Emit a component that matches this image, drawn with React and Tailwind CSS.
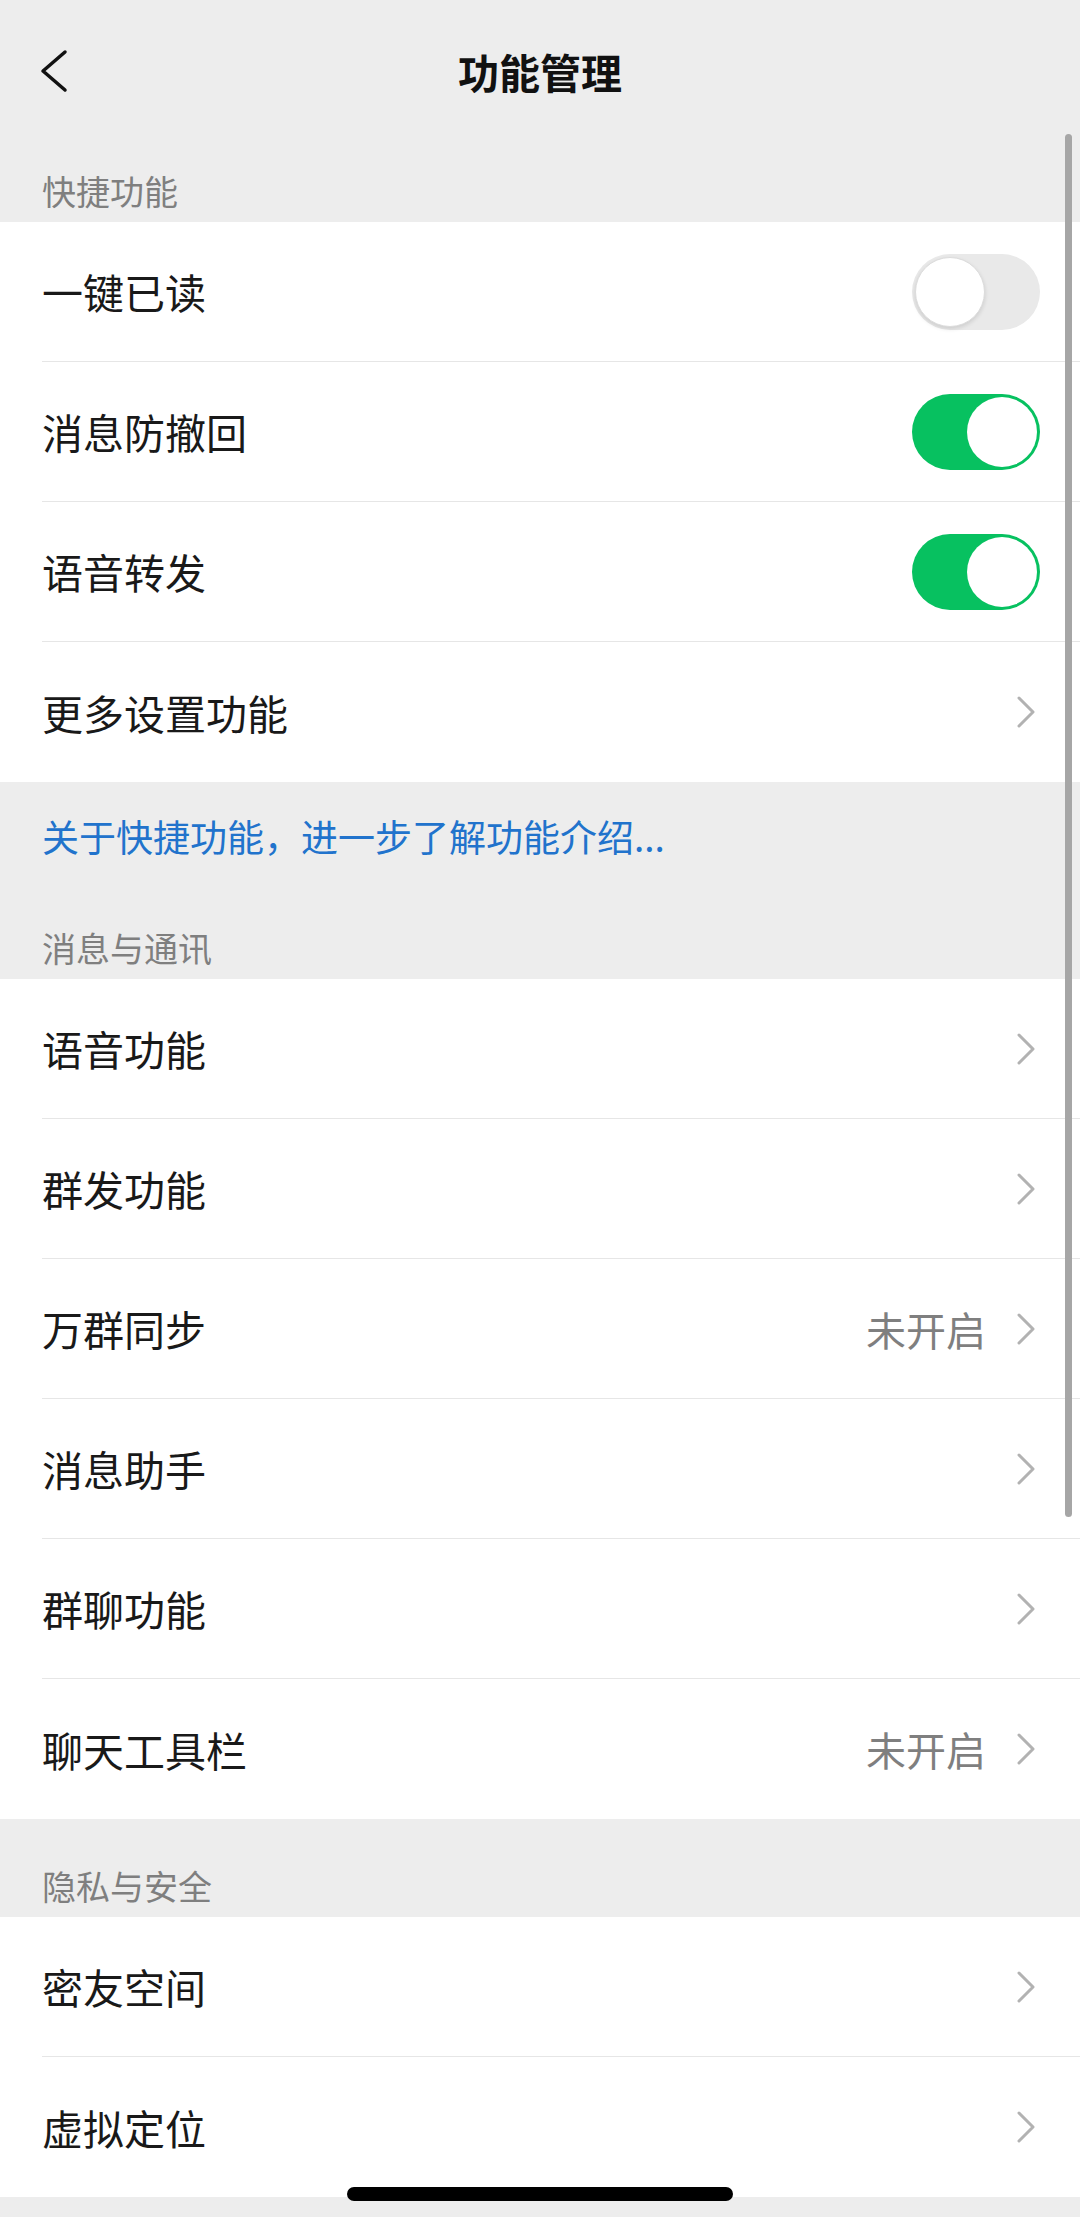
import React from "react";

const font = { fontFamily: '"Noto Sans CJK SC", "Noto Sans", sans-serif' };

const Chevron = () => (
  <svg width="18" height="32" viewBox="0 0 18 32" fill="none">
    <path d="M2 2 L16 16 L2 30" stroke="#b2b2b2" strokeWidth="3" strokeLinecap="round" strokeLinejoin="round" />
  </svg>
);

const Toggle = ({ on }) => (
  <div
    className={
      on
        ? "relative w-[128px] h-[76px] rounded-full bg-[#07c160]"
        : "relative w-[128px] h-[76px] rounded-full bg-[#e9e9e9]"
    }
  >
    <div
      className={
        on
          ? "absolute top-[3px] right-[3px] w-[70px] h-[70px] rounded-full bg-white"
          : "absolute top-[3px] left-[3px] w-[70px] h-[70px] rounded-full bg-white border border-[#dcdcdc] shadow-[0_2px_4px_rgba(0,0,0,0.12)]"
      }
    />
  </div>
);

const Row = ({ label, type, value, last }) => (
  <div className="pl-[42px] bg-white">
    <div
      className={
        last
          ? "h-[140px] flex items-center justify-between"
          : "h-[140px] flex items-center justify-between border-b border-[#e6e6e6]"
      }
    >
      <span className="text-[41px] leading-none text-[#191919]">{label}</span>
      {type === "toggle" ? (
        <div className="pr-[40px]">
          <Toggle on={value} />
        </div>
      ) : (
        <div className="flex items-center pr-[45px]">
          {value && <span className="text-[40px] leading-none text-[#7f7f7f] mr-[31px]">{value}</span>}
          <Chevron />
        </div>
      )}
    </div>
  </div>
);

const SectionLabel = ({ children, top }) => (
  <div className={top}>
    <div className="px-[42px] pb-[14px] text-[34px] leading-[34px] text-[#7f7f7f]">{children}</div>
  </div>
);

export default function App() {
  const quick = [
    { label: "一键已读", type: "toggle", value: false },
    { label: "消息防撤回", type: "toggle", value: true },
    { label: "语音转发", type: "toggle", value: true },
    { label: "更多设置功能", type: "link" },
  ];
  const msg = [
    { label: "语音功能" },
    { label: "群发功能" },
    { label: "万群同步", value: "未开启" },
    { label: "消息助手" },
    { label: "群聊功能" },
    { label: "聊天工具栏", value: "未开启" },
  ];
  const privacy = [{ label: "密友空间" }, { label: "虚拟定位" }];

  return (
    <div className="relative min-h-screen bg-[#ededed] overflow-hidden" style={font}>
      {/* nav */}
      <div className="h-[142px] grid grid-cols-[1fr_auto_1fr] items-center">
        <div className="pl-[40px]">
          <svg width="28" height="44" viewBox="0 0 28 44" fill="none">
            <path d="M25 3 L3 22 L25 41" stroke="#111" strokeWidth="3.5" strokeLinecap="round" strokeLinejoin="round" />
          </svg>
        </div>
        <div className="text-[41px] font-semibold text-[#111] leading-none">功能管理</div>
        <div />
      </div>

      <SectionLabel top="pt-[32px]">快捷功能</SectionLabel>
      <div>
        {quick.map((r, i) => (
          <Row key={r.label} {...r} last={i === quick.length - 1} />
        ))}
      </div>

      <div className="px-[42px] pt-[36px] pb-[44px] text-[37px] leading-[37px] text-[#2173cc]">
        关于快捷功能，进一步了解功能介绍...
      </div>

      <SectionLabel top="pt-[32px]">消息与通讯</SectionLabel>
      <div>
        {msg.map((r, i) => (
          <Row key={r.label} {...r} last={i === msg.length - 1} />
        ))}
      </div>

      <SectionLabel top="pt-[50px]">隐私与安全</SectionLabel>
      <div>
        {privacy.map((r, i) => (
          <Row key={r.label} {...r} last={i === privacy.length - 1} />
        ))}
      </div>

      {/* scroll indicator */}
      <div className="absolute top-[134px] right-[8px] w-[7px] h-[1383px] rounded-full bg-[#a6a6a6]" />
      {/* home indicator */}
      <div className="absolute bottom-[16px] left-1/2 -translate-x-1/2 w-[386px] h-[14px] rounded-full bg-black" />
    </div>
  );
}
